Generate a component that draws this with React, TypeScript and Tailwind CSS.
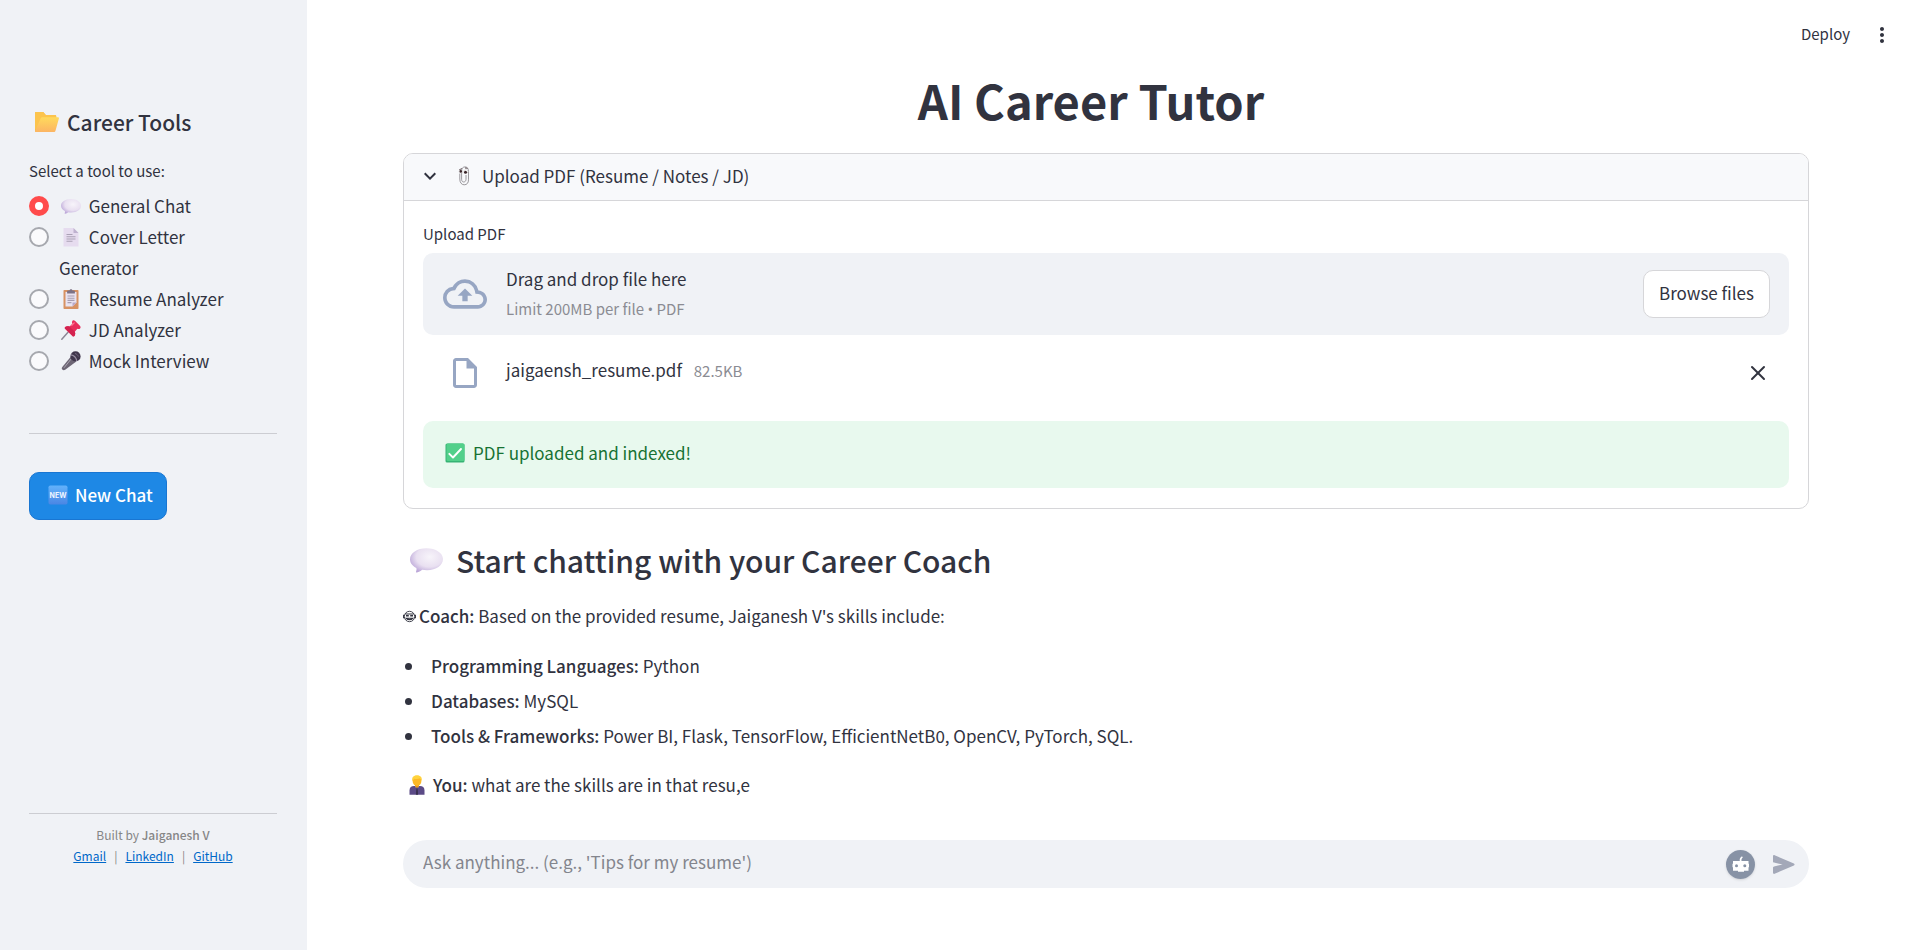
import { useState, type ReactNode } from "react";
import { MdExpandMore, MdMoreVert, MdOutlineCloudUpload, MdOutlineInsertDriveFile } from "react-icons/md";
import { FiX } from "react-icons/fi";

function FolderIcon() {
  return (
    <svg viewBox="0 0 24 20" className="h-5 w-6 shrink-0" aria-hidden="true">
      <defs>
        <linearGradient id="folder" x1="0" y1="0" x2="0" y2="1">
          <stop offset="0" stopColor="#ffda5c" />
          <stop offset="1" stopColor="#fcb563" />
        </linearGradient>
      </defs>
      <path d="M1.2 0h7l2.600 3h9c1 0 1.400.6 1.400 1.400V12L4 20H1.200C.4 20 0 19.500 0 19V1.200C0 .4.5 0 1.200 0z" fill="#f7b643" />
      <path d="M1.2 0h7l2.600 3h9c1 0 1.400.6 1.400 1.400V8H7L0 18V1.200C0 .4.5 0 1.200 0z" fill="#fcc44d" />
      <path d="M7.600 5.200h15.200c.9 0 1.300.7 1.100 1.400l-3.400 12.200c-.2.800-.8 1.200-1.600 1.200H1.400C.4 20 0 19.200.3 18.300L5.600 6.600c.4-.9 1-1.400 2-1.400z" fill="url(#folder)" />
    </svg>
  );
}

function BubbleIcon({ className }: { className: string }) {
  return (
    <svg viewBox="0 0 32 24" className={className} aria-hidden="true">
      <defs>
        <radialGradient id="bubble" cx=".6" cy=".36" r=".68">
          <stop offset="0" stopColor="#f7f4fa" />
          <stop offset=".6" stopColor="#e9e0f1" />
          <stop offset="1" stopColor="#bba6d8" />
        </radialGradient>
      </defs>
      <path d="M16 0c9 0 16 4.600 16 10.600S25.500 21.400 16.500 21.400c-1.700 0-3.300-.1-4.700-.4-1.500 1.300-3.500 2.300-5 2.700-.8.200-1.200-.4-.9-1.100.5-1 .6-2.200.3-3.400C2.400 17.300 0 14.300 0 10.700 0 4.700 7 0 16 0z" fill="url(#bubble)" />
    </svg>
  );
}

function PageIcon() {
  return (
    <svg viewBox="0 0 20 20" className="size-5" aria-hidden="true">
      <path d="M2.500 1h10l5 5v13.500h-15z" fill="#e6dcef" />
      <path d="M12.500 1 17.500 6h-5z" fill="#bfb2cf" />
      <path d="M5.500 7.500h6M5.500 9.800h9M5.500 12h9M5.500 14.200h6" stroke="#aaa1b5" strokeWidth="1.100" />
    </svg>
  );
}

function ClipboardIcon() {
  return (
    <svg viewBox="0 0 20 20" className="size-5" aria-hidden="true">
      <rect x="2.500" y="1" width="15" height="19" rx=".8" fill="#d79263" />
      <path d="M4.500 3h11v10.500l-4 4h-7z" fill="#e9e3f0" />
      <path d="M15.500 13.500h-4v4z" fill="#b9a9c9" />
      <path d="M7 1.500h1.500C8.700.6 9.200.2 10 .2s1.300.4 1.500 1.300H13c.6 0 .9.3.9.9v2.100H6.100V2.400c0-.6.3-.9.900-.9z" fill="#7c7285" />
      <path d="M6.500 7h7M6.500 9.200h7M6.500 11.400h7M6.500 13.600h4" stroke="#a79eb1" strokeWidth="1.100" />
    </svg>
  );
}

function PinIcon() {
  return (
    <svg viewBox="0 0 20 20" className="size-5" aria-hidden="true">
      <path d="M7 12.200.8 19.200" stroke="#8c8796" strokeWidth="1.500" strokeLinecap="round" />
      <path d="M11.500.8c.8-.8 1.800-.5 2.700.3l4.700 4.700c.8.8 1 1.900.2 2.700-.7.700-1.800.7-2.700.3l-2.600 3c.7 1.700.5 3.200-.4 4.100-.7.700-1.300.7-2 0L4.200 9c-.7-.7-.7-1.300 0-2 1-1 2.600-1.100 4.300-.4l2.900-2.800c-.5-1-.6-2.200.1-3z" fill="#e82c5b" />
      <path d="M8.500 6.600 13.800 11.800c.7 1.700.5 3.200-.4 4.100-.5.500-1.100.6-1.600.3L4 8.500c-.3-.5-.2-1 .2-1.500 1-1 2.600-1.100 4.300-.4z" fill="#d3224f" />
      <path d="m10.800 5.200 2.400-2.300" stroke="#ff7190" strokeWidth="1.300" strokeLinecap="round" />
    </svg>
  );
}

function MicIcon() {
  return (
    <svg viewBox="0 0 20 20" className="size-5" aria-hidden="true">
      <path d="M10 5.500 15 10.800 4.200 18.700c-1 .7-2.200.6-2.900-.1-.7-.8-.7-1.800 0-2.700z" fill="#6d6675" />
      <path d="M10.500 7.500 3 16.800" stroke="#aaa4b0" strokeWidth="1" />
      <circle cx="14.500" cy="5.400" r="5.100" fill="#40374c" />
      <path d="M9.900 3.900c2.700.4 5.300 3 5.900 6" stroke="#9a91a5" strokeWidth="1.200" fill="none" />
      <path d="M14 2.500c1.600.3 2.800 1.500 3.300 3" stroke="#74687f" strokeWidth="1" fill="none" />
    </svg>
  );
}

function NewIcon() {
  return (
    <svg viewBox="0 0 20 20" className="size-5" aria-hidden="true">
      <defs>
        <linearGradient id="newBadge" x1="0" y1="0" x2="0" y2="1">
          <stop offset="0" stopColor="#62b2fb" />
          <stop offset="1" stopColor="#4a86e4" />
        </linearGradient>
      </defs>
      <rect x=".5" y=".5" width="19" height="19" rx="1.800" fill="url(#newBadge)" />
      <text x="10" y="12.500" textAnchor="middle" fontSize="7" fontWeight="700" fill="#f0f6ff" fontFamily="Inter, sans-serif">
        NEW
      </text>
    </svg>
  );
}

function ClipIcon() {
  return (
    <svg viewBox="0 0 12 20" className="h-5 w-3" fill="none" aria-hidden="true">
      <path d="M1.800 7.500V13c0 3.400 1.600 5.800 4.400 5.800s4.300-2 4.300-5V5.200C10.500 2.400 9 .9 7 .9S3.600 2.400 3.600 4.500v8.800c0 1.600.8 2.700 2.100 2.700S8 14.900 8 13.300V9" stroke="#8e8c91" strokeWidth=".9" />
      <path d="M1.200 3.900 3.800 2.600M7 2l2.500.2" stroke="#4b3b3f" strokeWidth=".9" />
      <ellipse cx="3" cy="5.500" rx="1.900" ry="1.500" fill="#fff" stroke="#bbb" strokeWidth=".4" />
      <ellipse cx="8" cy="5.300" rx="2" ry="1.600" fill="#fff" stroke="#bbb" strokeWidth=".4" />
      <circle cx="2.800" cy="5.400" r="1.300" fill="#3b2529" />
      <circle cx="7.500" cy="6.200" r="1.500" fill="#3b2529" />
    </svg>
  );
}

function CheckIcon() {
  return (
    <svg viewBox="0 0 20 20" className="size-5" aria-hidden="true">
      <rect x=".5" y=".5" width="19" height="19" rx="1.600" fill="#36b374" />
      <rect x="1.500" y=".5" width="18" height="17.500" rx="1.600" fill="#52d08a" />
      <path d="m4.300 10.800 3.700 3.700 8-8.500" stroke="#fff" strokeWidth="1.900" fill="none" strokeLinecap="round" strokeLinejoin="round" />
    </svg>
  );
}

function CoachIcon() {
  return (
    <svg viewBox="0 0 13 13" className="mr-[3px] size-[13px] shrink-0" fill="none" stroke="#31333f" aria-hidden="true">
      <circle cx="6.500" cy="6.500" r="5.200" strokeWidth=".9" />
      <path d="M.6 4.800v3.400M12.400 4.800v3.400" strokeWidth="1.100" />
      <path d="M2.200 4h8.600M3.200 8.300c1.600 1.800 5 1.800 6.600 0z" strokeWidth="1.100" />
      <path d="M3 5.800h2.800M7.200 5.800H10" strokeWidth="1.600" />
    </svg>
  );
}

function PersonIcon() {
  return (
    <svg viewBox="0 0 16 20" className="h-5 w-4 shrink-0" aria-hidden="true">
      <path d="M.5 19.800v-4.300C.5 12.400 2.400 11 5 11h6c2.600 0 4.500 1.400 4.500 4.500v4.300z" fill="#5b4a86" />
      <path d="M5.800 10.800h4.400L8 15z" fill="#a99bc4" />
      <path d="M7.400 12h1.200l.5 7.800H6.900z" fill="#39304f" />
      <path d="M6 8h4v3.400l-2 1.500-2-1.500z" fill="#e99a1e" />
      <ellipse cx="8" cy="6" rx="4.400" ry="4.900" fill="#fcb827" />
      <path d="M3.300 6C2.600 2.500 4.500.3 8 .3s5.400 2.200 4.700 5.700c-.8-1-1.200-1.800-1.400-2.700-2 1-4.600.9-6.200.4-.4.9-1 1.500-1.800 2.300z" fill="#ffd33d" />
    </svg>
  );
}

function RobotAvatar() {
  return (
    <svg viewBox="0 0 29 29" className="size-full" aria-hidden="true">
      <circle cx="14.500" cy="14.500" r="14.500" fill="#8792a5" />
      <path d="M13.800 11c-.4-2 .3-3.800 2.200-4.800l.8 1.200c-1.200.9-1.500 2-1.300 3.600z" fill="#fff" />
      <path d="M7 11h15.500v2.800h.5v3.400h-.5v3.600H18v1h-6v-1H7v-3.600h-.5v-3.400H7z" fill="#fff" />
      <circle cx="10.500" cy="15.800" r="1.500" fill="#8792a5" />
      <circle cx="18.800" cy="15.800" r="1.500" fill="#8792a5" />
    </svg>
  );
}

function SendIcon() {
  return (
    <svg viewBox="0 0 22 19" className="h-[19px] w-[22px]" aria-hidden="true">
      <path d="M0 1.200C0 .4.8-.1 1.600.2l19.300 8.300c.9.400.9 1.600 0 2L1.600 18.800C.8 19.100 0 18.600 0 17.800v-5.200c0-.6.400-1.100 1-1.200l8.600-1.900L1 7.600c-.6-.1-1-.6-1-1.200z" fill="#a3a8b8" />
    </svg>
  );
}

const tools: { label: string; icon: ReactNode }[] = [
  { label: "General Chat", icon: <BubbleIcon className="h-[15px] w-5" /> },
  { label: "Cover Letter Generator", icon: <PageIcon /> },
  { label: "Resume Analyzer", icon: <ClipboardIcon /> },
  { label: "JD Analyzer", icon: <PinIcon /> },
  { label: "Mock Interview", icon: <MicIcon /> },
];

const skills = [
  { name: "Programming Languages:", value: "Python" },
  { name: "Databases:", value: "MySQL" },
  { name: "Tools & Frameworks:", value: "Power BI, Flask, TensorFlow, EfficientNetB0, OpenCV, PyTorch, SQL." },
];

const footerLinks = ["Gmail", "LinkedIn", "GitHub"];

function Sidebar() {
  const [tool, setTool] = useState(tools[0].label);
  return (
    <aside className="flex w-[307px] shrink-0 flex-col bg-[#f0f2f6] px-[29px] pb-[84px]">
      <h2 className="mt-[104px] flex items-center gap-2 pl-1.5 text-[21px] leading-9 font-medium">
        <FolderIcon />
        Career Tools
      </h2>
      <fieldset className="mt-[17px]">
        <legend className="mb-[5px] text-[15px] leading-7">Select a tool to use:</legend>
        {tools.map(({ label, icon }) => (
          <label key={label} className="flex cursor-pointer items-start leading-[31px]">
            <input
              type="radio"
              name="tool"
              checked={tool === label}
              onChange={() => setTool(label)}
              className="mt-1.5 mr-2.5 size-5 shrink-0 appearance-none rounded-full border-2 border-[#a6a8ae] bg-[#fafafc] checked:border-[6px] checked:border-[#ff4b4b] checked:bg-white"
            />
            <span className="w-[172px]">
              <span className="mr-1 mb-1 ml-0.5 inline-flex size-5 items-center justify-center align-middle">{icon}</span>{" "}
              {label}
            </span>
          </label>
        ))}
      </fieldset>
      <hr className="mt-[57px] mr-px border-[#cccdd2]" />
      <button
        type="button"
        className="mt-[38px] flex h-12 cursor-pointer items-center gap-[7px] self-start rounded-[10px] border border-[#1976d2] bg-[#1e88e5] pr-[13px] pb-0.5 pl-[18px] font-medium text-white"
      >
        <NewIcon />
        New Chat
      </button>
      <footer className="mt-auto mr-px border-t border-[#cccdd2] pt-2.5 text-center text-xs leading-[21px] text-[#868686]">
        <p>
          Built by <strong className="font-medium">Jaiganesh V</strong>
        </p>
        <p className="flex justify-center gap-2">
          {footerLinks.map((link, i) => (
            <span key={link} className="flex gap-2">
              {i > 0 && <span>|</span>}
              <a href="#" className="text-[#0068c9] underline">
                {link}
              </a>
            </span>
          ))}
        </p>
      </footer>
    </aside>
  );
}

function UploadPanel() {
  return (
    <details open className="overflow-hidden rounded-[10px] border border-[#d6d6d9] bg-white">
      <summary className="flex h-[47px] cursor-pointer list-none items-center border-b border-[#d6d6d9] bg-[#f8f9fb] pb-0.5 pl-3.5">
        <MdExpandMore className="mr-4 size-6" />
        <ClipIcon />
        <span className="ml-3">Upload PDF (Resume / Notes / JD)</span>
      </summary>
      <div className="px-[19px] pt-[18px] pb-5">
        <p className="text-[15px] leading-[30px]">Upload PDF</p>
        <div className="mt-1 flex h-[82px] items-center rounded-[10px] bg-[#f0f2f6] pr-[19px] pl-5">
          <MdOutlineCloudUpload className="mr-[19px] size-[44px] text-[#97a6c3]" />
          <div className="grow">
            <p className="leading-[30px]">Drag and drop file here</p>
            <p className="text-[15px] leading-[30px] text-[#8b8c93]">
              Limit 200MB per file <span className="font-['Open_Sans',sans-serif]">•</span> PDF
            </p>
          </div>
          <button type="button" className="h-12 cursor-pointer rounded-[10px] border border-[#d6d6d9] bg-white px-[15px] pb-0.5">
            Browse files
          </button>
        </div>
        <div className="flex h-[86px] items-center pr-[19px] pb-2.5 pl-5">
          <MdOutlineInsertDriveFile className="mr-[23px] ml-1 size-9 text-[#97a6c3]" />
          <p className="grow pb-1.5">
            jaigaensh_resume.pdf <span className="ml-2 text-[15px] text-[#8b8c93]">82.5KB</span>
          </p>
          <button type="button" aria-label="Remove file" className="cursor-pointer">
            <FiX className="size-6" />
          </button>
        </div>
        <p className="flex h-[67px] items-center gap-2 rounded-[10px] bg-[#e8f9ee] pb-1 pl-[22px] text-[#177233]">
          <CheckIcon />
          PDF uploaded and indexed!
        </p>
      </div>
    </details>
  );
}

export default function App() {
  return (
    <div className="flex min-h-screen bg-white font-['Source_Sans_Pro','Noto_Sans_CJK_SC',sans-serif] text-[17px] text-[#31333f]">
      <Sidebar />
      <main className="flex min-w-0 grow flex-col">
        <header className="flex h-[70px] items-center justify-end gap-5 pr-[25px] text-[15px]">
          <button type="button" className="cursor-pointer pb-px">Deploy</button>
          <button type="button" aria-label="Menu" className="cursor-pointer">
            <MdMoreVert className="size-6" />
          </button>
        </header>
        <div className="flex flex-col pr-[110px] pl-24">
          <h1 className="pr-[30px] text-center text-[47px] leading-[60px] font-bold">AI Career Tutor</h1>
          <div className="mt-[23px]">
            <UploadPanel />
          </div>
          <h2 className="mt-[30px] flex items-center gap-[13px] pl-[7px] text-[30px] leading-[42px] font-medium">
            <BubbleIcon className="h-[25px] w-[33px]" />
            Start chatting with your Career Coach
          </h2>
          <p className="mt-[19px] flex items-center leading-8">
            <CoachIcon />
            <span>
              <strong className="font-medium">Coach:</strong> Based on the provided resume, Jaiganesh V's skills include:
            </span>
          </p>
          <ul className="mt-[18px] list-disc pl-[22px]">
            {skills.map(({ name, value }) => (
              <li key={name} className="mb-[3px] pl-1.5 leading-8">
                <strong className="font-medium">{name}</strong> {value}
              </li>
            ))}
          </ul>
          <p className="mt-3.5 flex items-center gap-2 pl-1.5 leading-8">
            <PersonIcon />
            <span>
              <strong className="font-medium">You:</strong> what are the skills are in that resu,e
            </span>
          </p>
          <form
            onSubmit={(e) => e.preventDefault()}
            className="mt-[39px] flex h-12 items-center rounded-full bg-[#f0f2f6] pr-3.5 pl-5"
          >
            <input
              type="text"
              aria-label="Ask anything"
              placeholder="Ask anything... (e.g., 'Tips for my resume')"
              className="min-w-0 grow bg-transparent pb-1 outline-none placeholder:text-[#83858d]"
            />
            <button type="button" aria-label="Assistant" className="mr-[18px] size-[29px] cursor-pointer rounded-full shadow">
              <RobotAvatar />
            </button>
            <button type="submit" aria-label="Send" className="cursor-pointer">
              <SendIcon />
            </button>
          </form>
        </div>
      </main>
    </div>
  );
}
